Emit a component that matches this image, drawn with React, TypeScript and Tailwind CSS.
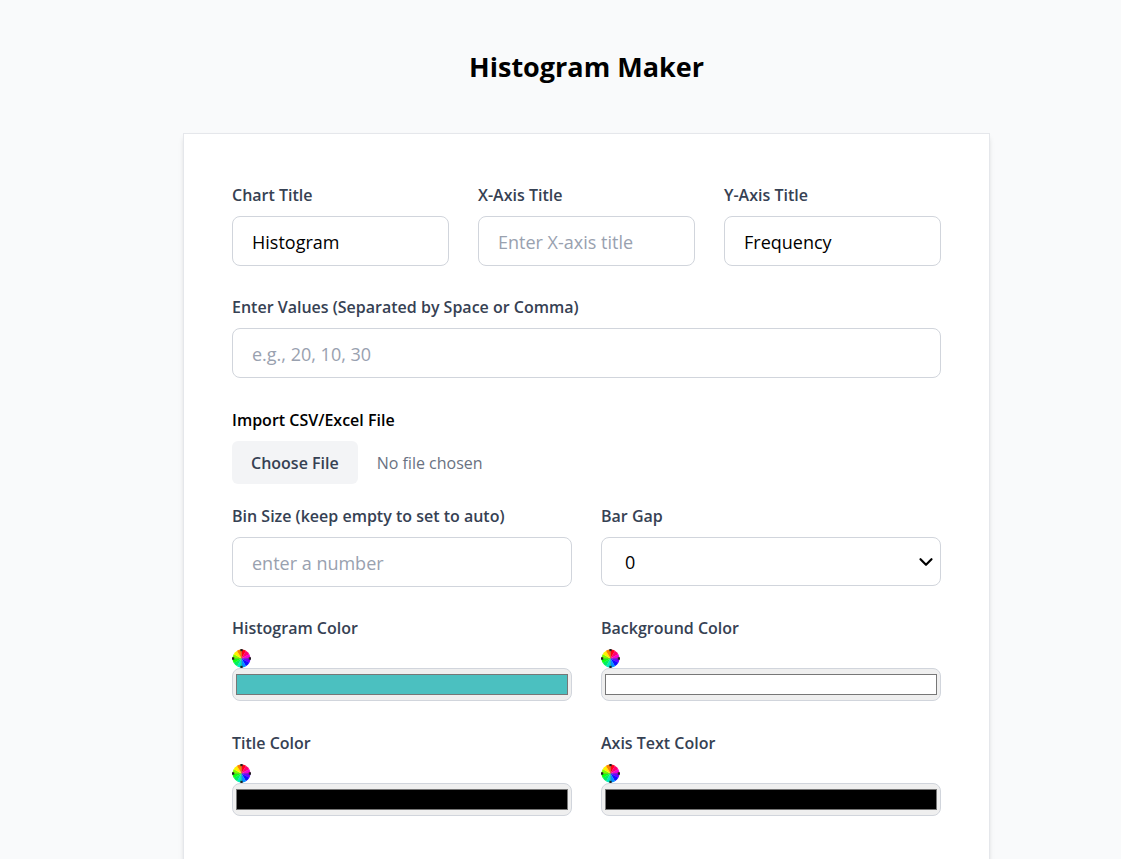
import React, { useState } from "react";
import { ChevronDown } from "lucide-react";

const labelClass = "block mb-2 text-base leading-[26px] font-semibold text-gray-700";
const inputClass =
  "block w-full h-[50px] px-[19px] pt-px text-lg text-black bg-white border border-gray-300 rounded-lg placeholder:text-gray-400";

// clockwise from the top
const wheelColors = [
  "#ff0018", "#ff0070", "#f000d0", "#7000ff", "#1010ff", "#0090ff",
  "#00e8c0", "#00f060", "#10ff10", "#80ff00", "#fff000", "#ff8000",
];

type FieldProps = {
  id: string;
  label: string;
  value: string;
  placeholder?: string;
  onChange: (value: string) => void;
};

function TextField({ id, label, value, placeholder, onChange }: FieldProps) {
  return (
    <div>
      <label htmlFor={id} className={labelClass}>
        {label}
      </label>
      <input
        id={id}
        type="text"
        value={value}
        placeholder={placeholder}
        onChange={(e) => onChange(e.target.value)}
        className={inputClass}
      />
    </div>
  );
}

function ColorWheel() {
  return (
    <svg width="19" height="19" viewBox="0 0 20 20" aria-hidden="true" className="block">
      {wheelColors.map((color, i) => (
        <path
          key={color}
          d="M10 10 L7.4 0.9 A9.5 9.5 0 0 1 12.6 0.9 Z"
          fill={color}
          transform={`rotate(${i * 30 + 15} 10 10)`}
        />
      ))}
      <path d="M10 0v2.4M10 17.6v2.4M0 10h2.4M17.6 10h2.4" stroke="#222" strokeWidth="2.4" />
      <path d="M10 3v14M3 10h14" stroke="#222" strokeWidth="0.8" opacity="0.25" />
    </svg>
  );
}

function ColorField({ id, label, value, onChange }: FieldProps) {
  return (
    <div>
      <label htmlFor={id} className={labelClass}>
        {label}
      </label>
      <ColorWheel />
      <input
        id={id}
        type="color"
        value={value}
        onChange={(e) => onChange(e.target.value)}
        className="block w-full h-[33px] px-px py-px bg-[#efefef] border border-gray-300 rounded-lg"
      />
    </div>
  );
}

export default function App() {
  const [chartTitle, setChartTitle] = useState("Histogram");
  const [xTitle, setXTitle] = useState("");
  const [yTitle, setYTitle] = useState("Frequency");
  const [values, setValues] = useState("");
  const [binSize, setBinSize] = useState("");
  const [barGap, setBarGap] = useState("0");
  const [histogramColor, setHistogramColor] = useState("#4bc0c0");
  const [backgroundColor, setBackgroundColor] = useState("#ffffff");
  const [titleColor, setTitleColor] = useState("#000000");
  const [axisColor, setAxisColor] = useState("#000000");

  return (
    <div className="min-h-screen bg-gray-50 pl-[52px] pt-12 font-['Open_Sans','Noto_Sans',sans-serif]">
      <h1 className="mb-[47px] text-center text-[27px] leading-[38px] font-bold text-black">Histogram Maker</h1>

      <form className="mx-auto w-full max-w-[807px] p-12 bg-white border border-gray-200 shadow-md">
        {/* Titles */}
        <div className="mb-7 grid grid-cols-3 gap-[29px]">
          <TextField id="chart-title" label="Chart Title" value={chartTitle} onChange={setChartTitle} />
          <TextField id="x-title" label="X-Axis Title" value={xTitle} placeholder="Enter X-axis title" onChange={setXTitle} />
          <TextField id="y-title" label="Y-Axis Title" value={yTitle} onChange={setYTitle} />
        </div>

        {/* Data */}
        <div className="mb-[29px]">
          <TextField
            id="values"
            label="Enter Values (Separated by Space or Comma)"
            value={values}
            placeholder="e.g., 20, 10, 30"
            onChange={setValues}
          />
        </div>

        <div className="mb-[19px]">
          <label htmlFor="file" className="block mb-2 text-base leading-[26px] font-semibold text-black">
            Import CSV/Excel File
          </label>
          <input
            id="file"
            type="file"
            accept=".csv,.xlsx,.xls"
            className="block w-full text-base text-gray-500 file:mr-[19px] file:h-[43px] file:px-[19px] file:rounded-md file:bg-gray-100 file:text-base file:font-semibold file:text-gray-700"
          />
        </div>

        {/* Bins */}
        <div className="mb-7 grid grid-cols-2 gap-[29px]">
          <TextField
            id="bin-size"
            label="Bin Size (keep empty to set to auto)"
            value={binSize}
            placeholder="enter a number"
            onChange={setBinSize}
          />
          <div>
            <label htmlFor="bar-gap" className={labelClass}>
              Bar Gap
            </label>
            <div className="relative">
              <select
                id="bar-gap"
                value={barGap}
                onChange={(e) => setBarGap(e.target.value)}
                className="block w-full h-[49px] px-[23px] appearance-none text-lg text-black bg-white border border-gray-300 rounded-lg"
              >
                <option value="0">0</option>
                <option value="0.1">0.1</option>
                <option value="0.2">0.2</option>
                <option value="0.5">0.5</option>
              </select>
              <ChevronDown
                size={22}
                strokeWidth={2.4}
                className="absolute right-1 inset-y-0 my-auto text-black pointer-events-none"
              />
            </div>
          </div>
        </div>

        {/* Colors */}
        <div className="grid grid-cols-2 gap-[29px]">
          <ColorField id="histogram-color" label="Histogram Color" value={histogramColor} onChange={setHistogramColor} />
          <ColorField id="background-color" label="Background Color" value={backgroundColor} onChange={setBackgroundColor} />
          <ColorField id="title-color" label="Title Color" value={titleColor} onChange={setTitleColor} />
          <ColorField id="axis-color" label="Axis Text Color" value={axisColor} onChange={setAxisColor} />
        </div>
      </form>
    </div>
  );
}
